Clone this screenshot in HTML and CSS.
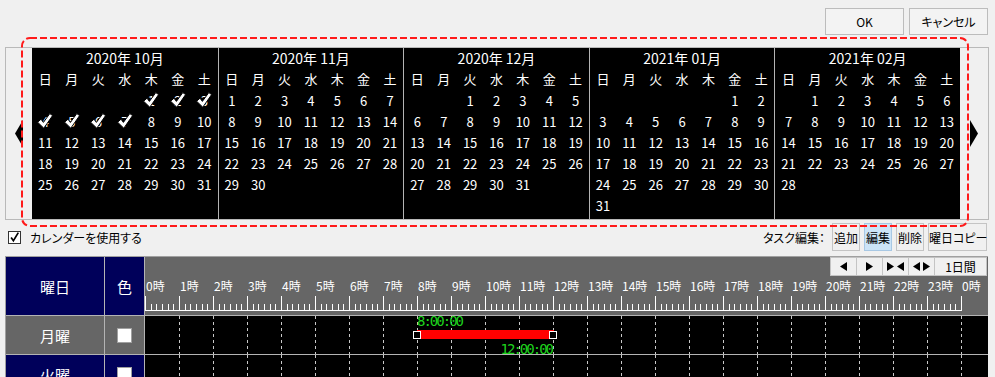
FILE: index.html
```html
<!DOCTYPE html>
<html lang="ja">

<head>
  <meta charset="UTF-8">
  <meta name="viewport" content="width=device-width, initial-scale=1.0">
  <title>スケジュール設定</title>
  <link rel="stylesheet" href="styles.css">
</head>

<body>
  <!-- shared svg patterns -->
  <svg class="defs" width="0" height="0">
    <defs>
      <pattern id="ruler" width="34" height="15" patternUnits="userSpaceOnUse">
        <rect x="0" y="0" width="1" height="14" fill="#fff" />
        <rect x="6" y="8" width="1" height="6" fill="#fff" />
        <rect x="11" y="8" width="1" height="6" fill="#fff" />
        <rect x="17" y="8" width="1" height="6" fill="#fff" />
        <rect x="23" y="8" width="1" height="6" fill="#fff" />
        <rect x="28" y="8" width="1" height="6" fill="#fff" />
      </pattern>
      <pattern id="hourDash" width="34" height="6" patternUnits="userSpaceOnUse">
        <rect x="0" y="0" width="1" height="3" fill="#c8c8c8" />
      </pattern>
      <symbol id="tick" viewBox="0 0 16 16">
        <path d="M0.6 9.2 L4 6.2 L6.4 9.4 L12.8 0.6 L15.6 2.6 L6.8 15.2 Z" fill="#fff" stroke="#000" stroke-width="1" stroke-linejoin="round" />
      </symbol>
    </defs>
  </svg>

  <div class="actions">
    <button class="btn">OK</button>
    <button class="btn">キャンセル</button>
  </div>

  <!-- Calendar -->
  <div class="calendar">
    <div class="nav">
      <svg width="8" height="27" viewBox="0 0 8 27"><polygon points="8,0 8,27 0,13.5" fill="#000" /></svg>
    </div>
    <div class="months">
      <div class="month">
        <div class="title">2020年 10月</div>
        <span>日</span><span>月</span><span>火</span><span>水</span><span>木</span><span>金</span><span>土</span>
        <span></span><span></span><span></span><span></span>
        <span class="done">1<svg><use href="#tick" /></svg></span>
        <span class="done">2<svg><use href="#tick" /></svg></span>
        <span class="done">3<svg><use href="#tick" /></svg></span>
        <span class="done">4<svg><use href="#tick" /></svg></span>
        <span class="done">5<svg><use href="#tick" /></svg></span>
        <span class="done">6<svg><use href="#tick" /></svg></span>
        <span class="done">7<svg><use href="#tick" /></svg></span>
        <span>8</span><span>9</span><span>10</span>
        <span>11</span><span>12</span><span>13</span><span>14</span><span>15</span><span>16</span><span>17</span>
        <span>18</span><span>19</span><span>20</span><span>21</span><span>22</span><span>23</span><span>24</span>
        <span>25</span><span>26</span><span>27</span><span>28</span><span>29</span><span>30</span><span>31</span>
      </div>
      <div class="month">
        <div class="title">2020年 11月</div>
        <span>日</span><span>月</span><span>火</span><span>水</span><span>木</span><span>金</span><span>土</span>
        <span>1</span><span>2</span><span>3</span><span>4</span><span>5</span><span>6</span><span>7</span>
        <span>8</span><span>9</span><span>10</span><span>11</span><span>12</span><span>13</span><span>14</span>
        <span>15</span><span>16</span><span>17</span><span>18</span><span>19</span><span>20</span><span>21</span>
        <span>22</span><span>23</span><span>24</span><span>25</span><span>26</span><span>27</span><span>28</span>
        <span>29</span><span>30</span>
      </div>
      <div class="month">
        <div class="title">2020年 12月</div>
        <span>日</span><span>月</span><span>火</span><span>水</span><span>木</span><span>金</span><span>土</span>
        <span></span><span></span><span>1</span><span>2</span><span>3</span><span>4</span><span>5</span>
        <span>6</span><span>7</span><span>8</span><span>9</span><span>10</span><span>11</span><span>12</span>
        <span>13</span><span>14</span><span>15</span><span>16</span><span>17</span><span>18</span><span>19</span>
        <span>20</span><span>21</span><span>22</span><span>23</span><span>24</span><span>25</span><span>26</span>
        <span>27</span><span>28</span><span>29</span><span>30</span><span>31</span>
      </div>
      <div class="month">
        <div class="title">2021年 01月</div>
        <span>日</span><span>月</span><span>火</span><span>水</span><span>木</span><span>金</span><span>土</span>
        <span></span><span></span><span></span><span></span><span></span><span>1</span><span>2</span>
        <span>3</span><span>4</span><span>5</span><span>6</span><span>7</span><span>8</span><span>9</span>
        <span>10</span><span>11</span><span>12</span><span>13</span><span>14</span><span>15</span><span>16</span>
        <span>17</span><span>18</span><span>19</span><span>20</span><span>21</span><span>22</span><span>23</span>
        <span>24</span><span>25</span><span>26</span><span>27</span><span>28</span><span>29</span><span>30</span>
        <span>31</span>
      </div>
      <div class="month">
        <div class="title">2021年 02月</div>
        <span>日</span><span>月</span><span>火</span><span>水</span><span>木</span><span>金</span><span>土</span>
        <span></span><span>1</span><span>2</span><span>3</span><span>4</span><span>5</span><span>6</span>
        <span>7</span><span>8</span><span>9</span><span>10</span><span>11</span><span>12</span><span>13</span>
        <span>14</span><span>15</span><span>16</span><span>17</span><span>18</span><span>19</span><span>20</span>
        <span>21</span><span>22</span><span>23</span><span>24</span><span>25</span><span>26</span><span>27</span>
        <span>28</span>
      </div>
    </div>
    <div class="nav">
      <svg width="8" height="27" viewBox="0 0 8 27"><polygon points="0,0 0,27 8,13.5" fill="#000" /></svg>
    </div>
  </div>

  <!-- annotation around the calendar -->
  <svg class="mark" width="949" height="191" viewBox="0 0 949 191">
    <rect x="1" y="1" width="946" height="188" rx="8" fill="none" stroke="#ff1a1a" stroke-width="2" stroke-dasharray="7 3" />
  </svg>

  <div class="options">
    <label class="use">
      <span class="checkbox">
        <svg width="13" height="13" viewBox="0 0 13 13"><path d="M2.5 6.5 L5.2 10.3 L11 0.8" fill="none" stroke="#000" stroke-width="2" /></svg>
      </span>
      カレンダーを使用する
    </label>
    <div class="task-tools">
      <span>タスク編集：</span>
      <button class="tool">追加</button>
      <button class="tool active">編集</button>
      <button class="tool">削除</button>
      <button class="tool copy">曜日コピー</button>
    </div>
  </div>

  <!-- Weekly timeline -->
  <div class="timeline">
    <div class="tl-row tl-head">
      <div class="c-day">曜日</div>
      <div class="c-color">色</div>
      <div class="track">
        <div class="zoom">
          <button class="zbtn"><svg width="7" height="9"><polygon points="7,0 7,9 0,4.5" /></svg></button>
          <button class="zbtn"><svg width="7" height="9"><polygon points="0,0 0,9 7,4.5" /></svg></button>
          <button class="zbtn"><svg width="17" height="9"><polygon points="0,0 0,9 7,4.5" /><polygon points="17,0 17,9 10,4.5" /></svg></button>
          <button class="zbtn"><svg width="17" height="9"><polygon points="7,0 7,9 0,4.5" /><polygon points="10,0 10,9 17,4.5" /></svg></button>
          <button class="zbtn wide">1日間</button>
        </div>
        <div class="hours">
          <span>0時</span><span>1時</span><span>2時</span><span>3時</span><span>4時</span><span>5時</span>
          <span>6時</span><span>7時</span><span>8時</span><span>9時</span><span>10時</span><span>11時</span>
          <span>12時</span><span>13時</span><span>14時</span><span>15時</span><span>16時</span><span>17時</span>
          <span>18時</span><span>19時</span><span>20時</span><span>21時</span><span>22時</span><span>23時</span>
          <span>0時</span>
        </div>
        <svg class="ruler" width="817" height="15">
          <rect x="0" y="0" width="817" height="14" fill="url(#ruler)" />
          <rect x="0" y="14" width="817" height="1" fill="#fff" />
        </svg>
      </div>
    </div>

    <div class="tl-row selected">
      <div class="c-day">月曜</div>
      <div class="c-color"><span class="swatch"></span></div>
      <div class="track">
        <svg class="grid" width="843" height="38">
          <rect x="34" y="0" width="783" height="38" fill="url(#hourDash)" />
        </svg>
        <span class="time start">8:00:00</span>
        <span class="task"></span>
        <span class="handle left"></span>
        <span class="handle right"></span>
        <span class="time end">12:00:00</span>
      </div>
    </div>

    <div class="tl-row">
      <div class="c-day">火曜</div>
      <div class="c-color"><span class="swatch"></span></div>
      <div class="track">
        <svg class="grid" width="843" height="38">
          <rect x="34" y="0" width="783" height="38" fill="url(#hourDash)" />
        </svg>
      </div>
    </div>
  </div>
</body>

</html>
```

FILE: styles.css
```css
* {
  box-sizing: border-box;
}

body {
  margin: 0;
  width: 995px;
  height: 377px;
  overflow: hidden;
  position: relative;
  background: #f0f0f0;
  font-family: "Noto Sans CJK JP", sans-serif;
  font-size: 12px;
  font-feature-settings: "palt";
  color: #000;
}

button {
  font-family: inherit;
  font-size: 12px;
  font-feature-settings: "palt";
  color: #000;
  padding: 0;
  white-space: nowrap;
}

.defs {
  position: absolute;
}

/* top buttons */
.actions {
  display: flex;
  justify-content: flex-end;
  gap: 5px;
  padding: 8px 7px 0 0;
}

.btn {
  width: 79px;
  height: 27px;
  border: 1px solid #bcbcbc;
  background: #f3f3f3;
}

/* calendar */
.calendar {
  display: flex;
  width: 984px;
  height: 173px;
  margin: 12px 0 0 5px;
  border: 1px solid #b9b9b9;
}

.nav {
  width: 26px;
  display: flex;
  align-items: center;
  justify-content: center;
}

.nav:last-child {
  width: 28px;
}

.months {
  width: 928px;
  display: grid;
  grid-template-columns: repeat(5, 1fr);
  background: #000;
}

.month {
  display: grid;
  grid-template-columns: repeat(7, 1fr);
  grid-template-rows: 20px 22px;
  grid-auto-rows: 21px;
  color: #fff;
  font-size: 13px;
  font-feature-settings: normal;
  line-height: 21px;
  text-align: center;
}

.month + .month {
  border-left: 1px solid #b4b4b4;
}

.month .title {
  grid-column: 1 / 8;
  font-size: 14px;
  line-height: 21px;
}

.month span {
  position: relative;
}

.done svg {
  position: absolute;
  left: 50%;
  top: 2px;
  width: 16px;
  height: 16px;
  margin-left: -8px;
}

.mark {
  position: absolute;
  left: 21px;
  top: 37px;
}

/* options row */
.options {
  display: flex;
  justify-content: space-between;
  align-items: center;
  height: 28px;
  margin-top: 3px;
  padding: 0 8px;
}

.use {
  display: flex;
  align-items: center;
  gap: 9px;
}

.checkbox {
  width: 13px;
  height: 13px;
  border: 1px solid #333;
  background: #fff;
  display: flex;
  align-items: center;
  justify-content: center;
}

.task-tools {
  display: flex;
  align-items: center;
  gap: 4px;
  height: 100%;
}

.task-tools span {
  margin-right: 3px;
}

.tool {
  width: 28px;
  height: 28px;
  border: 1px solid #c4c4c4;
  background: #f0f0f0;
}

.tool.copy {
  width: 59px;
}

.tool.active {
  background: #cce4f7;
  border-color: #a8c8e4;
}

/* timeline */
.timeline {
  width: 983px;
  margin: 5px 0 0 5px;
  border-left: 1px solid #a0a0a0;
  border-top: 1px solid #a0a0a0;
}

.tl-row {
  display: flex;
  height: 39px;
  border-bottom: 1px solid #b4b4b4;
  background: #000;
}

.tl-row.tl-head {
  height: 59px;
  background: #666;
}

.c-day {
  width: 99px;
  border-right: 1px solid #b4b4b4;
  background: #00005a;
  color: #fff;
  font-size: 15px;
  display: flex;
  align-items: center;
  justify-content: center;
}

.c-color {
  width: 40px;
  border-right: 1px solid #b4b4b4;
  background: #00005a;
  color: #fff;
  font-size: 15px;
  display: flex;
  align-items: center;
  justify-content: center;
}

.selected .c-day,
.selected .c-color {
  background: #666;
}

.swatch {
  width: 15px;
  height: 15px;
  border: 1px solid #a0a0a0;
  background: #fff;
}

.track {
  flex: 1;
  position: relative;
}

.tl-head .track {
  display: flex;
  flex-direction: column;
  overflow: hidden;
}

.zoom {
  display: flex;
  justify-content: flex-end;
  height: 19px;
  padding-right: 1px;
}

.zbtn {
  width: 27px;
  height: 19px;
  margin-left: -1px;
  border: 1px solid #c4c4c4;
  background: #f0f0f0;
  display: flex;
  align-items: center;
  justify-content: center;
}

.zbtn svg {
  fill: #000;
}

.zbtn.wide {
  width: 53px;
}

.hours {
  display: flex;
  height: 20px;
  color: #fff;
  line-height: 20px;
  white-space: nowrap;
  font-feature-settings: normal;
}

.hours span {
  flex: none;
  width: 34px;
  padding-left: 1px;
}

.ruler {
  display: block;
}

.grid {
  display: block;
}

.task {
  position: absolute;
  left: 272px;
  top: 14px;
  width: 137px;
  height: 9px;
  background: #ff0000;
}

.handle {
  position: absolute;
  top: 15px;
  width: 8px;
  height: 8px;
  border: 1px solid #fff;
  background: #000;
}

.handle.left {
  left: 268px;
}

.handle.right {
  left: 404px;
}

.time {
  position: absolute;
  font-family: "DejaVu Sans Mono", monospace;
  font-size: 14px;
  letter-spacing: -2px;
  line-height: 13px;
  color: #1ed21e;
}

.time.start {
  left: 272px;
  top: -1px;
}

.time.end {
  right: 436px;
  top: 27px;
}
```
